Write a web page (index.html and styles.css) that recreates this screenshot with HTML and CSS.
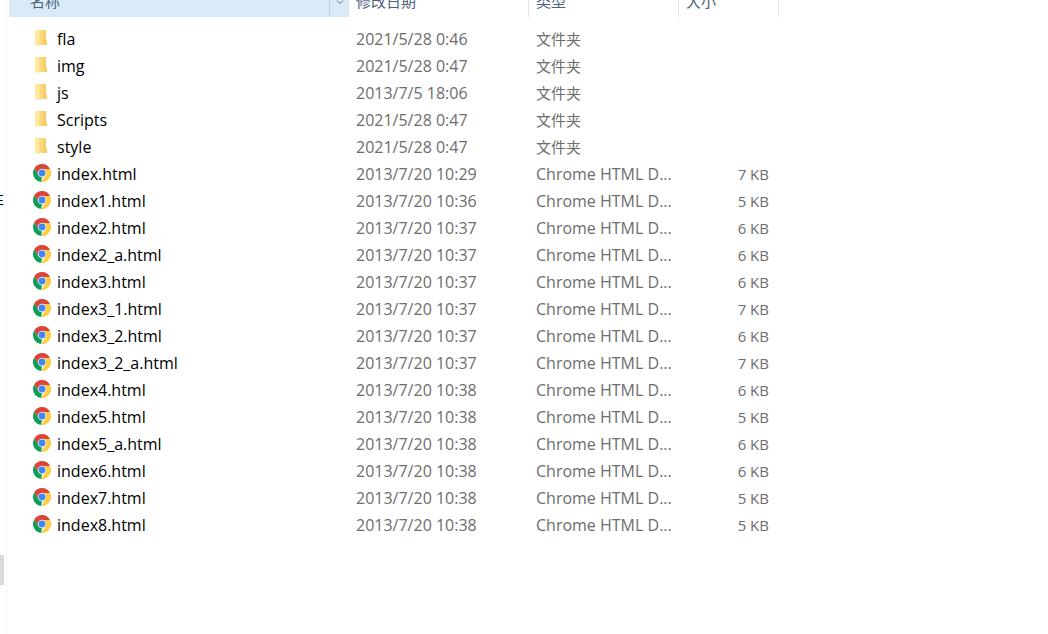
FILE: index.html
```
<!DOCTYPE html>
<html lang="zh-CN">
<head>
    <meta charset="UTF-8">
    <meta name="viewport" content="width=device-width, initial-scale=1.0">
    <title>文件列表</title>
    <link rel="stylesheet" href="styles.css">
</head>
<body>
    <svg class="defs" aria-hidden="true">
        <symbol id="folder" viewBox="0 0 18 18">
            <path fill="#fbd87c" d="M5 1h8v10.500h1V16H5z"/>
            <path fill="#f6cf69" d="M10 1h3v10.500h1V16h-4z"/>
            <path fill="#ffe8a0" d="M2 1h3l1.500 1.500V15L5 17.500 2 16z"/>
        </symbol>
        <symbol id="chrome" viewBox="0 0 18 18">
            <path fill="#db4437" d="M9 0a9 9 0 0 1 8 4.900H9L5.450 11.050 1.210 4.500A9 9 0 0 1 9 0z"/>
            <path fill="#0f9d58" d="M1.210 4.500l4.240 6.550A4.100 4.100 0 0 0 9 13.100L8.200 18A9 9 0 0 1 1.210 4.500z"/>
            <path fill="#ffcd40" d="M9 4.900h8A9 9 0 0 1 8.200 18l4.350-6.950z"/>
            <circle cx="9" cy="9" r="4.200" fill="#f1f1f1"/>
            <circle cx="9" cy="9" r="3.400" fill="#4285f4"/>
        </symbol>
    </svg>

    <div class="explorer">
        <div class="sidebar">
            <div class="sidebar-item">性</div>
            <div class="sidebar-thumb"></div>
        </div>

        <div class="files">
            <table class="file-table">
                <colgroup>
                    <col class="col-name">
                    <col class="col-date">
                    <col class="col-type">
                    <col class="col-size">
                    <col>
                </colgroup>
                <thead>
                    <tr>
                        <th class="sorted">
                            <div class="head-name">
                                <button type="button" class="head-btn">名称</button>
                                <button type="button" class="head-menu" aria-label="筛选">
                                    <svg width="8" height="5" viewBox="0 0 8 5"><path d="M1 0.500l3 3 3-3" fill="none" stroke="#5f6f80"/></svg>
                                </button>
                            </div>
                        </th>
                        <th><button type="button" class="head-btn">修改日期</button></th>
                        <th><button type="button" class="head-btn">类型</button></th>
                        <th><button type="button" class="head-btn">大小</button></th>
                        <td></td>
                    </tr>
                </thead>
                <tbody id="file-rows"></tbody>
            </table>
        </div>
    </div>

    <script src="files.js"></script>
</body>
</html>
```
FILE: files.js
```
const files = [
    ['fla', '2021/5/28 0:46'],
    ['img', '2021/5/28 0:47'],
    ['js', '2013/7/5 18:06'],
    ['Scripts', '2021/5/28 0:47'],
    ['style', '2021/5/28 0:47'],
    ['index.html', '2013/7/20 10:29', 7],
    ['index1.html', '2013/7/20 10:36', 5],
    ['index2.html', '2013/7/20 10:37', 6],
    ['index2_a.html', '2013/7/20 10:37', 6],
    ['index3.html', '2013/7/20 10:37', 6],
    ['index3_1.html', '2013/7/20 10:37', 7],
    ['index3_2.html', '2013/7/20 10:37', 6],
    ['index3_2_a.html', '2013/7/20 10:37', 7],
    ['index4.html', '2013/7/20 10:38', 6],
    ['index5.html', '2013/7/20 10:38', 5],
    ['index5_a.html', '2013/7/20 10:38', 6],
    ['index6.html', '2013/7/20 10:38', 6],
    ['index7.html', '2013/7/20 10:38', 5],
    ['index8.html', '2013/7/20 10:38', 5]
];

// A row without a size is a folder
document.getElementById('file-rows').innerHTML = files.map(([name, date, size]) => `
    <tr>
        <td>
            <a class="file-link" href="#">
                <svg class="file-icon"><use href="#${size ? 'chrome' : 'folder'}"/></svg>
                <span>${name}</span>
            </a>
        </td>
        <td>${date}</td>
        <td class="${size ? 'type' : 'type-folder'}">${size ? 'Chrome HTML D...' : '文件夹'}</td>
        <td class="size">${size ? size + ' KB' : ''}</td>
        <td></td>
    </tr>`).join('');
```
FILE: styles.css
```
* {
    box-sizing: border-box;
}

body {
    margin: 0;
    background-color: #fff;
    font-family: "Open Sans", "Noto Sans CJK SC", sans-serif;
    font-size: 15px;
    color: #6d6d6d;
}

.defs {
    display: none;
}

.explorer {
    display: flex;
    height: 100vh;
    overflow: hidden;
}

.sidebar {
    display: flex;
    flex-direction: column;
    width: 7px;
    padding-top: 187px;
    padding-right: 2px;
    border-right: 1px solid #f3f3f3;
}

.sidebar-item {
    display: flex;
    justify-content: flex-end;
    height: 24px;
    line-height: 24px;
    overflow: hidden;
    font-size: 14px;
    color: #000;
}

.sidebar-thumb {
    height: 30px;
    margin-top: 344px;
    background-color: #d9d9d9;
}

.files {
    flex: 1;
    padding-left: 2px;
}

/* the list is scrolled a little, so the header is cut at the top */
.file-table {
    width: 100%;
    margin-top: -9px;
    table-layout: fixed;
    border-spacing: 0;
}

.col-name {
    width: 340px;
}

.col-date {
    width: 180px;
}

.col-type {
    width: 150px;
}

.col-size {
    width: 100px;
}

th {
    height: 26px;
    padding: 0;
    border-right: 1px solid #e5e5e5;
    text-align: left;
    vertical-align: top;
}

th.sorted {
    border-right: 0;
    background-color: #d9ebf9;
}

.head-name {
    display: flex;
}

.head-btn {
    display: block;
    height: 20px;
    padding: 0 7px;
    border: 0;
    background: none;
    font: inherit;
    font-weight: normal;
    line-height: 20px;
    color: #4c607a;
}

.head-name .head-btn {
    flex: 1;
    padding-left: 21px;
    text-align: left;
}

.head-menu {
    display: flex;
    justify-content: center;
    width: 20px;
    height: 26px;
    padding: 9px 0 0;
    border: 0;
    border-left: 1px solid #bccfdf;
    background: none;
}

tbody::before {
    content: "";
    display: block;
    height: 8px;
}

tbody td {
    height: 27px;
    padding: 0 7px;
    font-size: 16px;
    line-height: 26px;
    white-space: nowrap;
}

tbody td.type-folder {
    font-size: 15px;
}

tbody td.size {
    padding-right: 10px;
    font-size: 15px;
    text-align: right;
}

.file-link {
    display: flex;
    gap: 6px;
    padding-left: 17px;
    color: #000;
    text-decoration: none;
}

.file-icon {
    width: 18px;
    height: 18px;
    margin-top: 3px;
}
```
